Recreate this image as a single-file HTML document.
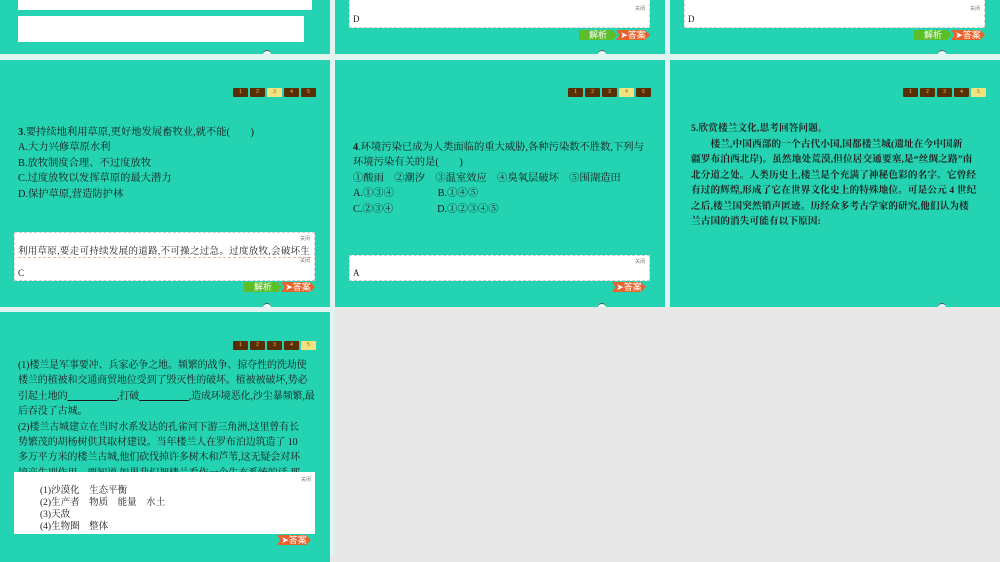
<!DOCTYPE html>
<html><head><meta charset="utf-8"><style>
body{margin:0;width:1000px;height:556px;background:#e8e8e8;position:relative;overflow:hidden;font-family:"Liberation Serif","Noto Serif CJK SC",serif;color:#1a1a1a}
.mint{position:absolute;background:#e2f4ef}
.s{position:absolute;background:#24d3b1;width:330px}
.wb{position:absolute;background:#fff;border:1px dashed #ccc;box-sizing:border-box}
.pg{position:absolute;top:28px;left:233px;display:flex;gap:2px}
.pg div{width:15px;height:9px;background:#5a2e05;color:#e8c070;font:5px "Liberation Sans",sans-serif;text-align:center;line-height:9px;border-radius:1px}
.pg div.a{background:#f3e27f;color:#8a6a00}
.t{position:absolute;left:18px;font-size:10.3px;line-height:15.4px}
.cl{position:absolute;right:4px;font:5px "Liberation Sans","Noto Sans CJK SC",sans-serif;color:#777}
.bg{position:absolute;height:10px;font:9px "Liberation Sans","Noto Sans CJK SC",sans-serif;color:#fff;line-height:10px;text-align:center}
.g{background:#5cbf2a;width:38px;clip-path:polygon(0 0,88% 0,100% 50%,88% 100%,0 100%)}
.o{background:#e8632b;width:34px;clip-path:polygon(0 0,85% 0,100% 50%,85% 100%,0 100%,10% 50%)}
.n{position:absolute;width:8px;height:3px;border-radius:4px 4px 0 0;background:#e8fff8;bottom:0;border-top:1px solid #555}
</style></head><body>
<div class="mint" style="left:0;top:0;width:1000px;height:307px"></div>
<div class="mint" style="left:0;top:307px;width:335px;height:249px"></div>
<!-- row1 -->
<div class="s" style="left:0;top:0;height:54px">
<div class="wb" style="left:18px;top:0;width:294px;height:10px;border:none"></div>
<div class="wb" style="left:18px;top:16px;width:286px;height:26px;border:none"></div>
<div class="n" style="left:263px"></div></div>
<div class="s" style="left:335px;top:0;height:54px">
<div class="wb" style="left:14px;top:-2px;width:301px;height:30px"><span class="cl" style="top:6px">关闭</span><span style="position:absolute;left:3px;top:15px;font-size:9px">D</span></div>
<div class="bg g" style="left:244px;top:30px">解析</div><div class="bg o" style="left:281px;top:30px">➤答案</div>
<div class="n" style="left:263px"></div></div>
<div class="s" style="left:670px;top:0;height:54px">
<div class="wb" style="left:14px;top:-2px;width:301px;height:30px"><span class="cl" style="top:6px">关闭</span><span style="position:absolute;left:3px;top:15px;font-size:9px">D</span></div>
<div class="bg g" style="left:244px;top:30px">解析</div><div class="bg o" style="left:281px;top:30px">➤答案</div>
<div class="n" style="left:268px"></div></div>
<!-- row2 -->
<div class="s" style="left:0;top:60px;height:247px">
<div class="pg"><div>1</div><div>2</div><div class="a">3</div><div>4</div><div>5</div></div>
<div class="t" style="top:65px"><b>3</b>.要持续地利用草原,更好地发展畜牧业,就不能(　　)<br>A.大力兴修草原水利<br>B.放牧制度合理、不过度放牧<br>C.过度放牧以发挥草原的最大潜力<br>D.保护草原,营造防护林</div>
<div class="wb" style="left:14px;top:172px;width:301px;height:49px"><span class="cl" style="top:2px">关闭</span><div style="position:absolute;left:3px;top:10px;font-size:9.5px;letter-spacing:.3px;white-space:nowrap;border-bottom:1px dashed #e8b0a0;width:293px;overflow:hidden">利用草原,要走可持续发展的道路,不可操之过急。过度放牧,会破坏生态</div><span class="cl" style="top:24px">关闭</span><span style="position:absolute;left:3px;top:35px;font-size:9px">C</span></div>
<div class="bg g" style="left:244px;top:222px">解析</div><div class="bg o" style="left:281px;top:222px">➤答案</div>
<div class="n" style="left:263px"></div></div>
<div class="s" style="left:335px;top:60px;height:247px">
<div class="pg"><div>1</div><div>2</div><div>3</div><div class="a">4</div><div>5</div></div>
<div class="t" style="top:80px"><b>4</b>.环境污染已成为人类面临的重大威胁,各种污染数不胜数,下列与<br>环境污染有关的是(　　)<br>①酸雨　②潮汐　③温室效应　④臭氧层破坏　⑤围湖造田<br>A.①③④　　　　 B.①④⑤<br>C.②③④　　　　 D.①②③④⑤</div>
<div class="wb" style="left:14px;top:195px;width:301px;height:26px"><span class="cl" style="top:2px">关闭</span><span style="position:absolute;left:3px;top:12px;font-size:9px">A</span></div>
<div class="bg o" style="left:277px;top:222px">➤答案</div>
<div class="n" style="left:263px"></div></div>
<div class="s" style="left:670px;top:60px;height:247px">
<div class="pg" style="left:233px"><div>1</div><div>2</div><div>3</div><div>4</div><div class="a">5</div></div>
<div class="t" style="top:61px;left:21px;width:310px;font-size:9.6px;letter-spacing:.15px;line-height:15.5px;white-space:nowrap;font-weight:bold;color:#222">5.欣赏楼兰文化,思考回答问题。<br>　　楼兰,中国西部的一个古代小国,国都楼兰城(遗址在今中国新<br>疆罗布泊西北岸)。虽然地处荒漠,但位居交通要塞,是“丝绸之路”南<br>北分道之处。人类历史上,楼兰是个充满了神秘色彩的名字。它曾经<br>有过的辉煌,形成了它在世界文化史上的特殊地位。可是公元 4 世纪<br>之后,楼兰国突然销声匿迹。历经众多考古学家的研究,他们认为楼<br>兰古国的消失可能有以下原因:</div>
<div class="n" style="left:268px"></div></div>
<!-- row3 -->
<div class="s" style="left:0;top:312px;height:250px;overflow:hidden">
<div class="pg" style="top:29px"><div>1</div><div>2</div><div>3</div><div>4</div><div class="a">5</div></div>
<div class="t" style="top:46px;width:310px;height:114px;overflow:hidden;font-size:10px;letter-spacing:-.1px;white-space:nowrap">(1)楼兰是军事要冲、兵家必争之地。频繁的战争、掠夺性的洗劫使<br>楼兰的植被和交通商贸地位受到了毁灭性的破坏。植被被破坏,势必<br>引起土地的<u>　　　　　</u>,打破<u>　　　　　</u>,造成环境恶化,沙尘暴频繁,最<br>后吞没了古城。<br>(2)楼兰古城建立在当时水系发达的孔雀河下游三角洲,这里曾有长<br>势繁茂的胡杨树供其取材建设。当年楼兰人在罗布泊边筑造了 10<br>多万平方米的楼兰古城,他们砍伐掉许多树木和芦苇,这无疑会对环<br>境产生副作用。要知道,如果我们把楼兰看作一个生态系统的话,那</div>
<div class="wb" style="left:14px;top:160px;width:301px;height:62px;border:none"><span class="cl" style="top:4px">关闭</span><div style="position:absolute;left:26px;top:13px;font-size:9.5px;line-height:12px">(1)沙漠化　生态平衡<br>(2)生产者　物质　能量　水土<br>(3)天敌<br>(4)生物圈　整体</div></div>
<div class="bg o" style="left:277px;top:223px">➤答案</div>
</div>
</body></html>
